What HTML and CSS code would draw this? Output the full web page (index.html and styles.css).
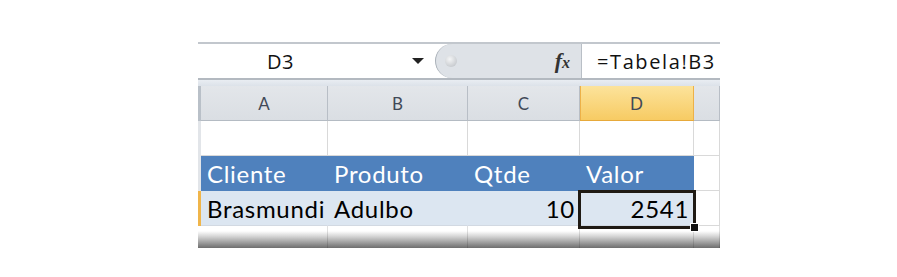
FILE: index.html
```html
<!DOCTYPE html>
<html lang="pt">
<head>
    <meta charset="UTF-8">
    <title>Tabela - referencia</title>
    <link rel="stylesheet" href="styles.css">
</head>
<body>

<div class="sheet">
    <!-- barra de formulas -->
    <div class="formula-bar">
        <div class="name-box">
            <span class="name">D3</span>
            <span class="drop"></span>
        </div>
        <div class="fx-area">
            <span class="knob"></span>
            <span class="fx"><i>f</i><i class="fx-x">x</i></span>
        </div>
        <div class="formula">=Tabela!B3</div>
    </div>
    <div class="bar-gap"></div>

    <!-- planilha -->
    <div class="grid">
        <div class="edge edge-head"></div>
        <div class="col-head">A</div>
        <div class="col-head">B</div>
        <div class="col-head">C</div>
        <div class="col-head active">D</div>
        <div class="col-head"></div>

        <div class="edge"></div>
        <div class="cell"></div>
        <div class="cell"></div>
        <div class="cell"></div>
        <div class="cell"></div>
        <div class="cell"></div>

        <div class="edge"></div>
        <div class="cell head">Cliente</div>
        <div class="cell head">Produto</div>
        <div class="cell head">Qtde</div>
        <div class="cell head">Valor</div>
        <div class="cell"></div>

        <div class="edge edge-sel"></div>
        <div class="cell band">Brasmundi</div>
        <div class="cell band">Adulbo</div>
        <div class="cell band num">10</div>
        <div class="cell band num selected">2541<span class="sel"><span class="handle"></span></span></div>
        <div class="cell"></div>

        <div class="edge fade"></div>
        <div class="cell fade"></div>
        <div class="cell fade"></div>
        <div class="cell fade"></div>
        <div class="cell fade"></div>
        <div class="cell fade"></div>
    </div>
</div>

</body>
</html>
```

FILE: styles.css
```css
body {
    margin: 0;
    background-color: #FFF;
    font-family: "Open Sans", "Noto Sans", sans-serif;
}
.sheet {
    width: 522px;
    margin: 42px 0 0 198px;
}

/* barra de formulas */
.formula-bar {
    display: flex;
    height: 38px;
    box-sizing: border-box;
    border-top: 2px solid #C2C7CD;
    border-bottom: 2px solid #B3B9C0;
}
.name-box {
    width: 237px;
    display: flex;
    align-items: center;
    background-color: #FFF;
}
.name {
    margin-left: 69px;
    font-size: 20px;
    color: #111;
    letter-spacing: 0.5px;
}
.drop {
    margin-left: auto;
    margin-right: 11px;
    width: 0;
    height: 0;
    border-left: 6px solid transparent;
    border-right: 6px solid transparent;
    border-top: 6px solid #222;
}
.fx-area {
    width: 147px;
    display: flex;
    align-items: center;
    box-sizing: border-box;
    background-color: #DEE2E7;
    border: 1px solid #A9B0B8;
    border-right-color: #B9BFC6;
    border-top: none;
    border-bottom: none;
    border-radius: 18px 0 0 18px;
}
.knob {
    width: 12px;
    height: 12px;
    margin-left: 9px;
    border-radius: 50%;
    background: radial-gradient(circle at 40% 35%, #F4F5F6, #B9BDC2);
}
.fx {
    margin-left: auto;
    margin-right: 11px;
    font-family: "Liberation Serif", serif;
    font-weight: bold;
    font-size: 22px;
    color: #333;
}
.fx-x {
    font-size: 16px;
}
.formula {
    flex: 1;
    display: flex;
    align-items: center;
    padding-left: 15px;
    background-color: #FFF;
    font-size: 20px;
    color: #111;
    letter-spacing: 1.6px;
    white-space: nowrap;
    overflow: hidden;
}
.bar-gap {
    height: 6px;
    background: linear-gradient(#E9EDF2, #DCE2E9);
}

/* grade */
.grid {
    display: grid;
    grid-template-columns: 3px 127px 140px 112px 114px 26px;
    grid-template-rows: 35px 35px 35px 35px 22px;
}
.edge {
    background-color: #E2E5E9;
}
.edge-head {
    background-color: #B9C0C8;
}
.edge-sel {
    background-color: #F0B54A;
}
.col-head {
    display: flex;
    align-items: center;
    justify-content: center;
    box-sizing: border-box;
    background: linear-gradient(#E3E6EA, #DADEE3);
    border-right: 1px solid #B8BEC6;
    border-bottom: 1px solid #B4BBC3;
    font-family: Lato, "Liberation Sans", sans-serif;
    font-size: 17px;
    color: #414957;
}
.col-head.active {
    background: linear-gradient(#FCE39B, #F7CB63);
    border-right-color: #EDB148;
    border-bottom-color: #E7A93A;
    box-shadow: inset 1px 0 0 #EDB148;
}
.cell {
    display: flex;
    align-items: flex-end;
    box-sizing: border-box;
    padding: 0 4px 3px 6px;
    border-right: 1px solid #D9D9D9;
    border-bottom: 1px solid #D9D9D9;
    font-family: Lato, "Liberation Sans", sans-serif;
    font-size: 24px;
    line-height: 27px;
    letter-spacing: 0.7px;
    color: #000;
    white-space: nowrap;
}
.head {
    background-color: #4F81BD;
    border-color: #4F81BD;
    color: #FFF;
}
.band {
    background-color: #DCE6F1;
    border-right-color: #DCE6F1;
    border-bottom-color: #D2D9E2;
}
.num {
    justify-content: flex-end;
}
.selected {
    position: relative;
}
.sel {
    position: absolute;
    left: -2px;
    top: -1px;
    right: -3px;
    bottom: -4px;
    border: 3px solid #1F1A14;
    z-index: 2;
}
.handle {
    position: absolute;
    right: -6px;
    bottom: -6px;
    width: 7px;
    height: 7px;
    background-color: #111;
    border: 1px solid #FFF;
}
.fade {
    background: linear-gradient(#FFF 0, #FFF 5px, #D8D8D8 10px, #9A9A9A 17px, #6E6E6E 22px);
    border-right-color: rgba(0, 0, 0, 0.12);
    border-bottom: none;
}
```
